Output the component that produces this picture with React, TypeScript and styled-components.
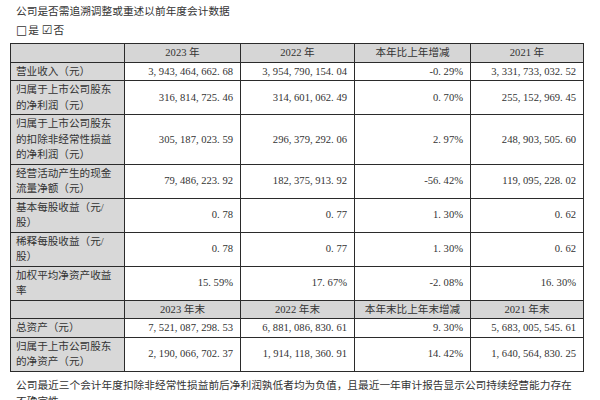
import React from "react";
import styled, { createGlobalStyle } from "styled-components";

const GlobalStyle = createGlobalStyle`
  html, body { margin: 0; padding: 0; background: #ffffff; }
  body {
    width: 600px;
    height: 400px;
    overflow: hidden;
    font-family: "Liberation Serif", "Noto Sans CJK SC", serif;
    color: #333333;
  }
`;

const Page = styled.div`
  padding-top: 3px;
`;

const Para = styled.div`
  padding-left: 16px;
  font-size: 10.7px;
  line-height: 16px;
  color: #333333;
`;

const CheckLine = styled(Para)`
  margin-top: 3px;
`;

const Box = styled.span`
  font-family: "DejaVu Sans", "Noto Sans CJK SC", sans-serif;
  font-size: 12px;
  margin-right: 1px;
`;

const Footnote = styled(Para)`
  margin-top: 5px;
  width: 562px;
`;

const Table = styled.table`
  margin: 5px 0 0 10px;
  width: 573px;
  border-collapse: collapse;
  table-layout: fixed;
  font-size: 10.6px;
  line-height: 15.5px;
`;

const Cell = styled.td<{ $align?: "left" | "right" | "center"; $shade?: boolean }>`
  border: 1px solid #2b2b2b;
  padding: 1px 7px 1px 5px;
  text-align: ${(p) => p.$align ?? "right"};
  background: ${(p) => (p.$shade ? "#d8d8d8" : "#ffffff")};
  vertical-align: middle;
  color: #333333;
`;

const HeadCell = styled.td`
  border: 1px solid #2b2b2b;
  padding: 1px 4px;
  text-align: center;
  background: #d6d6d6;
  color: #333333;
`;

const Punct = styled.span`
  display: inline-block;
  width: 0.5em;
  text-align: left;
`;

const Num = ({ v }: { v: string }) => (
  <>
    {v.split(/([,.])/).map((part, i) =>
      /^[,.]$/.test(part) ? <Punct key={i}>{part}</Punct> : <React.Fragment key={i}>{part}</React.Fragment>
    )}
  </>
);

type Row = [string, string, string, string, string];

const top: Row[] = [
  ["营业收入（元）", "3,943,464,662.68", "3,954,790,154.04", "-0.29%", "3,331,733,032.52"],
  ["归属于上市公司股东的净利润（元）", "316,814,725.46", "314,601,062.49", "0.70%", "255,152,969.45"],
  ["归属于上市公司股东的扣除非经常性损益的净利润（元）", "305,187,023.59", "296,379,292.06", "2.97%", "248,903,505.60"],
  ["经营活动产生的现金流量净额（元）", "79,486,223.92", "182,375,913.92", "-56.42%", "119,095,228.02"],
  ["基本每股收益（元/股）", "0.78", "0.77", "1.30%", "0.62"],
  ["稀释每股收益（元/股）", "0.78", "0.77", "1.30%", "0.62"],
  ["加权平均净资产收益率", "15.59%", "17.67%", "-2.08%", "16.30%"],
];

const bottom: Row[] = [
  ["总资产（元）", "7,521,087,298.53", "6,881,086,830.61", "9.30%", "5,683,005,545.61"],
  ["归属于上市公司股东的净资产（元）", "2,190,066,702.37", "1,914,118,360.91", "14.42%", "1,640,564,830.25"],
];

const DataRow = ({ r }: { r: Row }) => (
  <tr>
    <Cell $align="left" $shade>
      {r[0]}
    </Cell>
    {r.slice(1).map((v, i) => (
      <Cell key={i}>
        <Num v={v} />
      </Cell>
    ))}
  </tr>
);

const HeadRow = ({ labels }: { labels: string[] }) => (
  <tr>
    {labels.map((l, i) => (
      <HeadCell key={i}>{l}</HeadCell>
    ))}
  </tr>
);

export default function App() {
  return (
    <>
      <GlobalStyle />
      <Page>
        <Para>公司是否需追溯调整或重述以前年度会计数据</Para>
        <CheckLine>
          <Box>□</Box>是 <Box>☑</Box>否
        </CheckLine>
        <Table>
          <colgroup>
            <col style={{ width: 114 }} />
            <col style={{ width: 116 }} />
            <col style={{ width: 114 }} />
            <col style={{ width: 116 }} />
            <col style={{ width: 113 }} />
          </colgroup>
          <tbody>
            <HeadRow labels={["", "2023 年", "2022 年", "本年比上年增减", "2021 年"]} />
            {top.map((r, i) => (
              <DataRow key={i} r={r} />
            ))}
            <HeadRow labels={["", "2023 年末", "2022 年末", "本年末比上年末增减", "2021 年末"]} />
            {bottom.map((r, i) => (
              <DataRow key={i} r={r} />
            ))}
          </tbody>
        </Table>
        <Footnote>
          公司最近三个会计年度扣除非经常性损益前后净利润孰低者均为负值，且最近一年审计报告显示公司持续经营能力存在不确定性
        </Footnote>
      </Page>
    </>
  );
}
